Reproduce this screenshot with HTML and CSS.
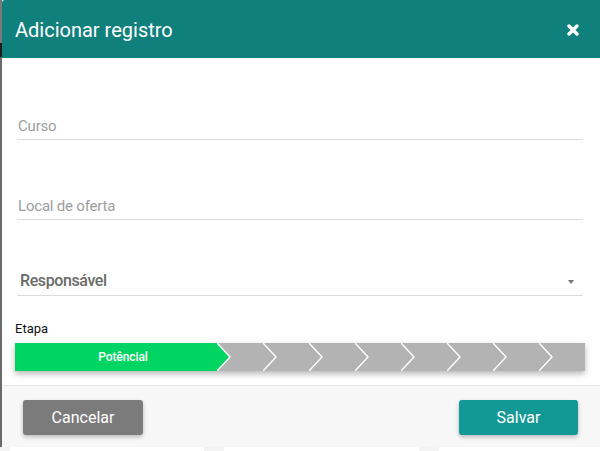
FILE: index.html
```html
<!DOCTYPE html>
<html lang="pt">
<head>
<meta charset="utf-8">
<title>Adicionar registro</title>
<link rel="stylesheet" href="styles.css">
</head>
<body>
<div class="screen">
  <div class="top">
    <div class="edge"></div>
    <div class="modal">
      <div class="header">
        <div class="title">Adicionar registro</div>
        <svg class="close" width="12" height="12" viewBox="0 0 12 12"><path d="M2 2 L10 10 M10 2 L2 10" stroke="#fff" stroke-width="3.4" stroke-linecap="round" fill="none"/></svg>
      </div>
      <div class="body">
        <div class="field field-first placeholder">Curso</div>
        <div class="field field-second placeholder">Local de oferta</div>
        <div class="field field-select">
          <span>Responsável</span>
          <span class="caret"></span>
        </div>
        <div class="label">Etapa</div>
        <div class="steps">
          <div class="step step-active">
            <span class="step-text">Potêncial</span>
            <svg class="chev" width="14" height="28" viewBox="0 0 14 28"><polygon points="0,0 13,14 0,28" fill="#00d563"/><polyline points="0,0 13,14 0,28" fill="none" stroke="#fff" stroke-width="1.4"/></svg>
          </div>
          <div class="step"><svg class="chev" width="14" height="28" viewBox="0 0 14 28"><polyline points="0,0 13,14 0,28" fill="none" stroke="#fff" stroke-width="1.4"/></svg></div>
          <div class="step"><svg class="chev" width="14" height="28" viewBox="0 0 14 28"><polyline points="0,0 13,14 0,28" fill="none" stroke="#fff" stroke-width="1.4"/></svg></div>
          <div class="step"><svg class="chev" width="14" height="28" viewBox="0 0 14 28"><polyline points="0,0 13,14 0,28" fill="none" stroke="#fff" stroke-width="1.4"/></svg></div>
          <div class="step"><svg class="chev" width="14" height="28" viewBox="0 0 14 28"><polyline points="0,0 13,14 0,28" fill="none" stroke="#fff" stroke-width="1.4"/></svg></div>
          <div class="step"><svg class="chev" width="14" height="28" viewBox="0 0 14 28"><polyline points="0,0 13,14 0,28" fill="none" stroke="#fff" stroke-width="1.4"/></svg></div>
          <div class="step"><svg class="chev" width="14" height="28" viewBox="0 0 14 28"><polyline points="0,0 13,14 0,28" fill="none" stroke="#fff" stroke-width="1.4"/></svg></div>
          <div class="step"><svg class="chev" width="14" height="28" viewBox="0 0 14 28"><polyline points="0,0 13,14 0,28" fill="none" stroke="#fff" stroke-width="1.4"/></svg></div>
          <div class="step"></div>
        </div>
      </div>
      <div class="footer">
        <button class="btn btn-cancel">Cancelar</button>
        <button class="btn btn-save">Salvar</button>
      </div>
    </div>
  </div>
  <div class="under">
    <div class="under-block b1"></div>
    <div class="under-block b2"></div>
    <div class="under-block b3"></div>
  </div>
</div>
</body>
</html>
```
FILE: styles.css
```css
html, body {
  margin: 0;
  padding: 0;
}
body {
  width: 600px;
  height: 451px;
  overflow: hidden;
  background: #f3f3f3;
  font-family: Roboto, "Noto Sans", "Liberation Sans", sans-serif;
}
.screen {
  display: flex;
  flex-direction: column;
}
.top {
  display: flex;
  height: 447px;
}
.edge {
  width: 2px;
  background: linear-gradient(#7a7a7a 0 43px, #1c1c1c 43px 57px, #6a6a6a 57px 100%);
}
.modal {
  flex: 1;
  display: flex;
  flex-direction: column;
  background: #fff;
  border-top-left-radius: 3px;
  overflow: hidden;
}
.header {
  height: 58px;
  flex: none;
  background: #10807c;
  display: flex;
  align-items: center;
  justify-content: space-between;
  padding: 0 21px 0 13px;
}
.title {
  color: #fff;
  font-size: 20px;
  margin-top: 1px;
}
.close {
  display: block;
  margin-top: 2px;
}
.body {
  flex: 1;
  padding: 0 15px 0 13px;
  display: flex;
  flex-direction: column;
}
.field {
  margin: 0 2px;
  border-bottom: 1px solid #dcdcdc;
  line-height: 20px;
  padding: 0 0 3px 1px;
}
.placeholder {
  color: #9e9e9e;
  font-size: 15px;
  letter-spacing: -0.2px;
}
.field-first {
  margin-top: 58px;
}
.field-second {
  margin-top: 56px;
}
.field-select {
  margin-top: 51px;
  padding-bottom: 4px;
  padding-left: 3px;
  font-size: 16px;
  font-weight: 500;
  color: #6a6a6a;
  letter-spacing: -0.4px;
  display: flex;
  align-items: center;
  justify-content: space-between;
}
.caret {
  width: 0;
  height: 0;
  border-left: 3.5px solid transparent;
  border-right: 3.5px solid transparent;
  border-top: 4px solid #777;
  margin-right: 9px;
  margin-top: 1px;
}
.label {
  margin-top: 25px;
  font-size: 13px;
  line-height: 16px;
  color: #111;
}
.steps {
  margin-top: 6px;
  display: flex;
  height: 28px;
  background: #b3b3b3;
  box-shadow: 0 3px 6px rgba(0, 0, 0, 0.28);
}
.step {
  width: 46px;
  flex: none;
  position: relative;
}
.step:last-child {
  flex: 1;
}
.step-active {
  width: 202px;
  background: #00d563;
  display: flex;
  align-items: center;
  justify-content: center;
  padding-left: 14px;
  box-sizing: border-box;
}
.step-text {
  color: #fff;
  font-size: 12px;
  font-weight: 500;
  letter-spacing: -0.1px;
}
.chev {
  position: absolute;
  top: 0;
  left: 100%;
  z-index: 2;
  display: block;
}
.footer {
  flex: none;
  height: 61px;
  background: #f7f7f7;
  border-top: 1px solid #e4e4e4;
  display: flex;
  justify-content: space-between;
  align-items: flex-start;
  padding: 14px 22px 0 21px;
  margin-top: 14px;
}
.btn {
  height: 35px;
  border: none;
  border-radius: 3px;
  color: #fff;
  font-family: Roboto, "Noto Sans", "Liberation Sans", sans-serif;
  font-size: 16px;
  box-shadow: 0 2px 4px rgba(0, 0, 0, 0.25);
  padding: 0;
}
.btn-cancel {
  width: 120px;
  background: #7b7b7b;
}
.btn-save {
  width: 119px;
  background: #139995;
}
.under {
  display: flex;
  height: 4px;
  padding-left: 10px;
  gap: 20px;
}
.under-block {
  background: #fff;
}
.b1 { width: 194px; }
.b2 { width: 195px; }
.b3 { flex: 1; }
```
